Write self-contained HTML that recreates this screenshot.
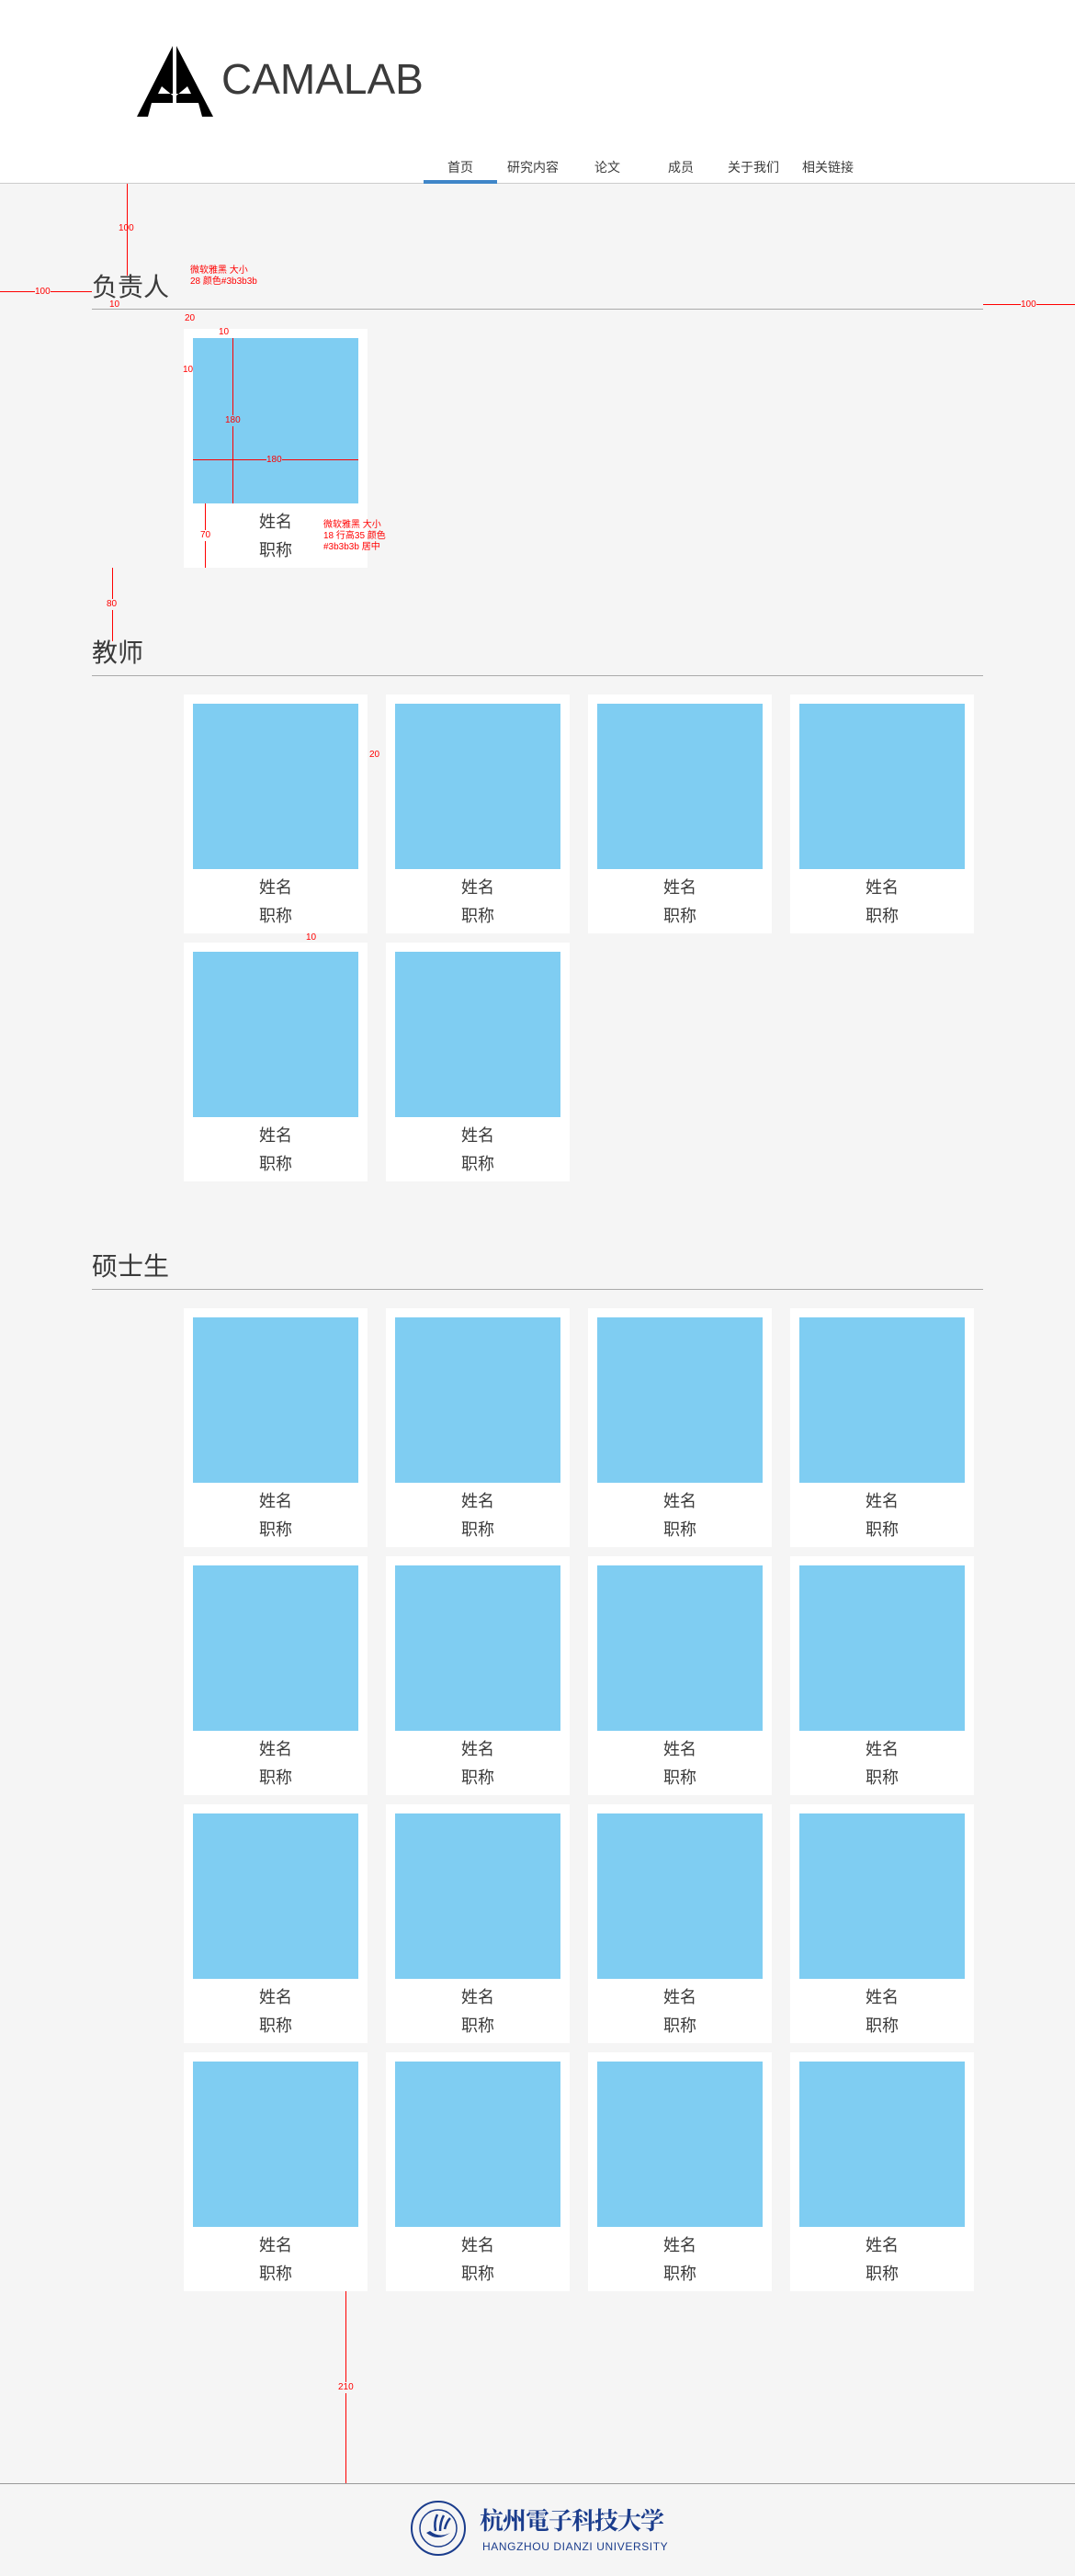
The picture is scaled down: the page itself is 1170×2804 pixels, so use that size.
<!DOCTYPE html>
<html><head><meta charset="utf-8"><style>
*{margin:0;padding:0;box-sizing:border-box}
body{width:1170px;height:2804px;background:#f5f5f5;position:relative;font-family:"Liberation Sans","Noto Sans CJK SC",sans-serif;color:#3b3b3b;overflow:hidden}
.hdr{position:absolute;left:0;top:0;width:1170px;height:200px;background:#fff;border-bottom:1px solid #ccc}
.brand{position:absolute;left:241px;top:59px;font-size:46px;color:#3b3b3b;letter-spacing:0}
.nav a{position:absolute;top:172px;font-size:14px;color:#3b3b3b;text-decoration:none;transform:translateX(-50%);white-space:nowrap}
.ul{position:absolute;left:461px;top:196px;width:80px;height:4px;background:#3f86c8}
.t{position:absolute;left:100px;font-size:28px;line-height:30px;color:#3b3b3b}
.ln{position:absolute;left:100px;width:970px;height:1px;background:#aaa}
.grid{position:absolute;left:200px;width:880px;display:flex;flex-wrap:wrap;gap:10px 20px}
.c{width:200px;height:260px;background:#fff;padding:10px}
.c i{display:block;width:180px;height:180px;background:#7fcdf2}
.c p{text-align:center;font-size:18px;line-height:31px;height:31px;color:#3b3b3b}
.c i+p{margin-top:5px}
.r{position:absolute;background:#f00}
.rt{position:absolute;color:#f00;font-size:10px;font-family:"Liberation Sans","Noto Sans CJK SC",sans-serif;line-height:12px;background:transparent}
.foot{position:absolute;left:0;top:2703px;width:1170px;height:1px;background:#999}
</style></head><body>
<div class="hdr">
<svg style="position:absolute;left:0;top:0" width="260" height="140">
<polygon points="188,50 149,127 161,127 165,112 188,112" fill="#000"/>
<polygon points="192,50 232,127 220,127 216,112 192,112" fill="#000"/>
<polygon points="188,104 188,102 172,102 176,94" fill="#fff"/>
<polygon points="192,104 192,102 208,102 204,94" fill="#fff"/>
</svg>
<div class="brand">CAMALAB</div>
<div class="nav"><a style="left:501px">首页</a><a style="left:580px">研究内容</a><a style="left:661px">论文</a><a style="left:741px">成员</a><a style="left:820px">关于我们</a><a style="left:901px">相关链接</a></div>
<div class="ul"></div>
</div>

<div class="t" style="top:298px">负责人</div>
<div class="ln" style="top:336px"></div>
<div class="grid" style="top:358px"><div class="c"><i></i><p>姓名</p><p>职称</p></div></div>

<div class="t" style="top:696px">教师</div>
<div class="ln" style="top:735px"></div>
<div class="grid" style="top:756px">
<div class="c"><i></i><p>姓名</p><p>职称</p></div><div class="c"><i></i><p>姓名</p><p>职称</p></div><div class="c"><i></i><p>姓名</p><p>职称</p></div><div class="c"><i></i><p>姓名</p><p>职称</p></div>
<div class="c"><i></i><p>姓名</p><p>职称</p></div><div class="c"><i></i><p>姓名</p><p>职称</p></div>
</div>

<div class="t" style="top:1364px">硕士生</div>
<div class="ln" style="top:1403px"></div>
<div class="grid" style="top:1424px">
<div class="c"><i></i><p>姓名</p><p>职称</p></div><div class="c"><i></i><p>姓名</p><p>职称</p></div><div class="c"><i></i><p>姓名</p><p>职称</p></div><div class="c"><i></i><p>姓名</p><p>职称</p></div>
<div class="c"><i></i><p>姓名</p><p>职称</p></div><div class="c"><i></i><p>姓名</p><p>职称</p></div><div class="c"><i></i><p>姓名</p><p>职称</p></div><div class="c"><i></i><p>姓名</p><p>职称</p></div>
<div class="c"><i></i><p>姓名</p><p>职称</p></div><div class="c"><i></i><p>姓名</p><p>职称</p></div><div class="c"><i></i><p>姓名</p><p>职称</p></div><div class="c"><i></i><p>姓名</p><p>职称</p></div>
<div class="c"><i></i><p>姓名</p><p>职称</p></div><div class="c"><i></i><p>姓名</p><p>职称</p></div><div class="c"><i></i><p>姓名</p><p>职称</p></div><div class="c"><i></i><p>姓名</p><p>职称</p></div>
</div>

<!-- annotations -->
<div class="r" style="left:138px;top:200px;width:1px;height:100px"></div>
<div class="rt" style="left:129px;top:243px">100</div>
<div class="r" style="left:0;top:317px;width:100px;height:1px"></div>
<div class="rt" style="left:38px;top:312px;background:#f5f5f5">100</div>
<div class="r" style="left:1070px;top:331px;width:100px;height:1px"></div>
<div class="rt" style="left:1111px;top:326px;background:#f5f5f5">100</div>
<div class="rt" style="left:207px;top:289px">微软雅黑 大小<br>28 颜色#3b3b3b</div>
<div class="rt" style="left:119px;top:326px">10</div>
<div class="rt" style="left:201px;top:341px">20</div>
<div class="rt" style="left:238px;top:356px">10</div>
<div class="rt" style="left:199px;top:397px">10</div>
<div class="r" style="left:253px;top:368px;width:1px;height:180px"></div>
<div class="r" style="left:210px;top:500px;width:180px;height:1px"></div>
<div class="rt" style="left:245px;top:452px;background:#7fcdf2">180</div>
<div class="rt" style="left:290px;top:495px;background:#7fcdf2">180</div>
<div class="r" style="left:223px;top:548px;width:1px;height:70px"></div>
<div class="rt" style="left:218px;top:577px;background:#fff">70</div>
<div class="rt" style="left:352px;top:566px">微软雅黑 大小<br>18 行高35 颜色<br>#3b3b3b 居中</div>
<div class="r" style="left:122px;top:618px;width:1px;height:80px"></div>
<div class="rt" style="left:116px;top:652px;background:#f5f5f5">80</div>
<div class="rt" style="left:402px;top:816px">20</div>
<div class="rt" style="left:333px;top:1015px">10</div>
<div class="r" style="left:376px;top:2494px;width:1px;height:210px"></div>
<div class="rt" style="left:368px;top:2593px;background:#f5f5f5">210</div>

<div class="foot"></div>
<svg style="position:absolute;left:446px;top:2721px" width="62" height="62">
<circle cx="31" cy="31" r="29" fill="none" stroke="#1a3c8c" stroke-width="2"/>
<circle cx="31" cy="31" r="20" fill="none" stroke="#1a3c8c" stroke-width="1.5"/>
<path d="M18 36 Q30 46 44 36 Q32 42 22 34 Z" fill="#1a3c8c"/>
<path d="M28 34 Q26 24 30 16 M33 34 Q33 24 37 17 M38 32 Q40 24 44 20" stroke="#1a3c8c" stroke-width="2.5" fill="none"/>
</svg>
<div style="position:absolute;left:522px;top:2726px;font-size:26px;color:#1a3c8c;font-family:'Noto Serif CJK SC',serif;font-weight:bold;letter-spacing:-1px;line-height:34px">杭州電子科技大学</div>
<div style="position:absolute;left:525px;top:2765px;font-size:12px;color:#1a3c8c;letter-spacing:0.6px">HANGZHOU DIANZI UNIVERSITY</div>
</body></html>
